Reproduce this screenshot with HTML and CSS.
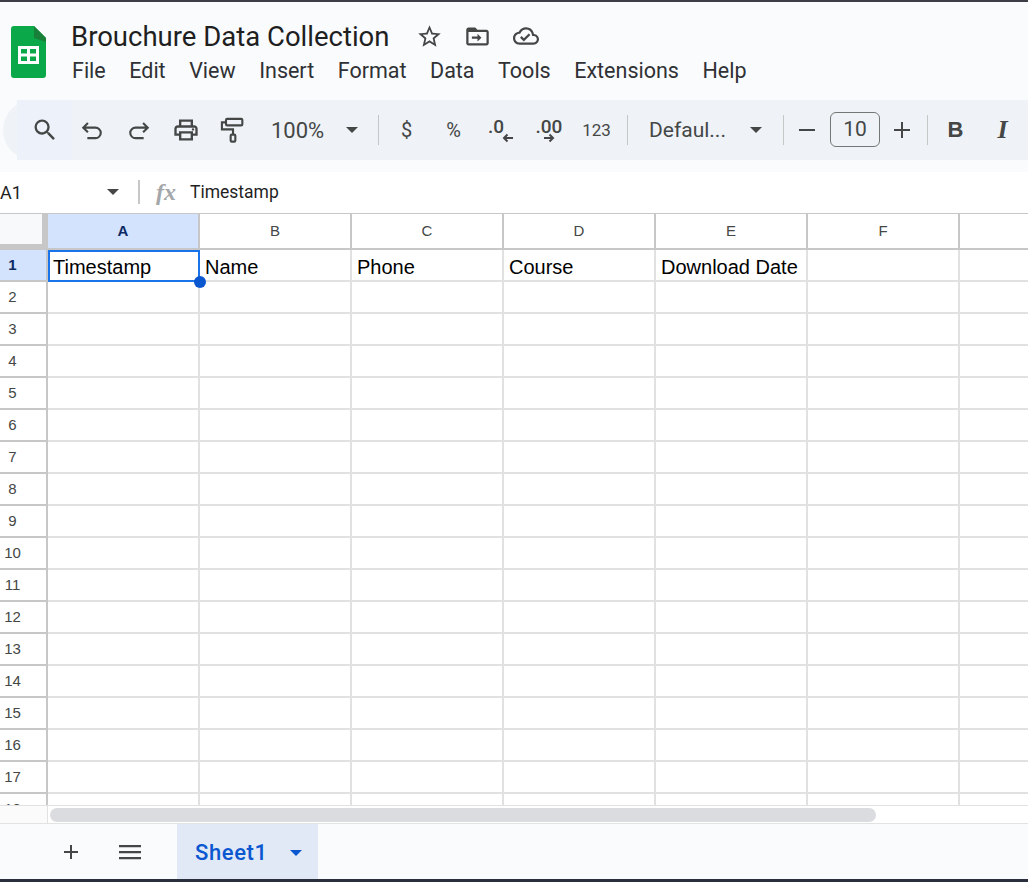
FILE: index.html
```html
<!DOCTYPE html>
<html lang="en">
  <head>
    <meta charset="UTF-8" />
    <title>Brouchure Data Collection</title>
    <link rel="stylesheet" href="styles.css">
  </head>
  <body>
    <header class="docbar">
      <svg class="logo" viewBox="0 0 35 52">
        <path d="M3 0H23L35 12V49a3 3 0 0 1-3 3H3a3 3 0 0 1-3-3V3a3 3 0 0 1 3-3z" fill="#0ba84a"/>
        <path d="M23 0L35 12V16L23 12z" fill="#188038"/>
        <path d="M7 20H28V38H7zM10 23V27.5H16V23zM19 23V27.5H25V23zM10 30.5V35H16V30.5zM19 30.5V35H25V30.5z" fill="#fff" fill-rule="evenodd"/>
      </svg>
      <div class="docinfo">
        <div class="titlerow">
          <span class="doctitle">Brouchure Data Collection</span>
          <svg class="ico star" viewBox="0 0 24 24"><path d="M22 9.24l-7.19-.62L12 2 9.19 8.63 2 9.24l5.46 4.73L5.82 21 12 17.27 18.18 21l-1.63-7.03L22 9.24zM12 15.4l-3.76 2.27 1-4.28-3.32-2.88 4.38-.38L12 6.1l1.71 4.04 4.38.38-3.32 2.88 1 4.28L12 15.4z"/></svg>
          <svg class="ico move" viewBox="0 0 24 24"><path d="M20 6h-8l-2-2H4c-1.1 0-2 .9-2 2v12c0 1.1.9 2 2 2h16c1.1 0 2-.9 2-2V8c0-1.1-.9-2-2-2zm0 12H4V8h16v10z"/><path d="M12 9.5l3.5 3.500L12 16.500v-2.500H7v-2h5z"/></svg>
          <svg class="ico cloud" viewBox="0 0 24 24"><path d="M19.35 10.04C18.67 6.59 15.64 4 12 4 9.11 4 6.6 5.64 5.35 8.04 2.34 8.36 0 10.91 0 14c0 3.31 2.69 6 6 6h13c2.76 0 5-2.24 5-5 0-2.64-2.05-4.78-4.65-4.96zM19 18H6c-2.21 0-4-1.79-4-4 0-2.05 1.53-3.76 3.56-3.97l1.07-.11.5-.95C8.08 7.14 9.94 6 12 6c2.62 0 4.88 1.86 5.39 4.43l.3 1.500 1.530.11c1.560.1 2.780 1.410 2.780 2.960 0 1.650-1.350 3-3 3zm-9-3.820l-2.090-2.090L6.500 13.500 10 17l6.010-6.010-1.410-1.410z"/></svg>
        </div>
        <nav class="menu">
          <span>File</span>
          <span>Edit</span>
          <span>View</span>
          <span>Insert</span>
          <span>Format</span>
          <span>Data</span>
          <span>Tools</span>
          <span>Extensions</span>
          <span>Help</span>
        </nav>
      </div>
    </header>

    <div class="toolbar">
      <div class="tool search">
        <svg class="ico big" viewBox="0 0 24 24"><path d="M15.500 14h-.79l-.28-.27A6.471 6.471 0 0 0 16 9.500 6.500 6.500 0 1 0 9.500 16c1.610 0 3.090-.59 4.230-1.570l.27.28v.79l5 4.990L20.490 19l-4.990-5zm-6 0C7.010 14 5 11.990 5 9.500S7.010 5 9.500 5 14 7.010 14 9.500 11.990 14 9.500 14z"/></svg>
      </div>
      <div class="tool">
        <svg class="ico line big" viewBox="0 0 24 24"><path d="M8.500 6L4.500 10l4 4M4.500 10H15a4.500 4.500 0 0 1 0 9H8"/></svg>
      </div>
      <div class="tool">
        <svg class="ico line big" viewBox="0 0 24 24"><path d="M15.500 6l4 4-4 4M19.500 10H9a4.500 4.500 0 0 0 0 9h7"/></svg>
      </div>
      <div class="tool">
        <svg class="ico big" viewBox="0 0 24 24"><path d="M19 8h-1V3H6v5H5c-1.660 0-3 1.340-3 3v6h4v4h12v-4h4v-6c0-1.660-1.340-3-3-3zM8 5h8v3H8V5zm8 12v2H8v-4h8v2zm2-2v-2H6v2H4v-4c0-.55.45-1 1-1h14c.55 0 1 .45 1 1v4h-2z"/><circle cx="18" cy="11.500" r="1"/></svg>
      </div>
      <div class="tool">
        <svg class="ico line big" viewBox="0 0 24 24"><rect x="6" y="2.500" width="14" height="5.500" rx="1"/><path d="M6 5.500H2.500v6H12V16"/><rect x="10" y="16" width="4" height="6" rx="1"/></svg>
      </div>
      <span class="zoomval">100%</span>
      <span class="caret zoomcaret"></span>
      <span class="sep"></span>
      <div class="tool glyph">$</div>
      <div class="tool glyph">%</div>
      <div class="tool dec dec-less">
        <span>.0</span>
        <svg class="arrow" viewBox="0 0 12 10"><path d="M11 5H2M5.500 1.500L2 5l3.500 3.500"/></svg>
      </div>
      <div class="tool dec">
        <span>.00</span>
        <svg class="arrow" viewBox="0 0 12 10"><path d="M1 5h9M6.500 1.500L10 5 6.500 8.500"/></svg>
      </div>
      <div class="tool glyph small">123</div>
      <span class="sep sep-b"></span>
      <span class="fontname">Defaul...</span>
      <span class="caret fontcaret"></span>
      <span class="sep sep-c"></span>
      <div class="step">
        <svg class="ico line" viewBox="0 0 24 24"><path d="M4 12h16"/></svg>
      </div>
      <div class="fontsize">10</div>
      <div class="step step-plus">
        <svg class="ico line" viewBox="0 0 24 24"><path d="M4 12h16M12 4v16"/></svg>
      </div>
      <span class="sep sep-d"></span>
      <div class="tool fmt bold">B</div>
      <div class="tool fmt ital">I</div>
    </div>

    <div class="formulabar">
      <span class="namebox">A1</span>
      <span class="caret namecaret"></span>
      <span class="fbsep"></span>
      <span class="fx">fx</span>
      <span class="formula">Timestamp</span>
    </div>

    <div class="sheet">
      <table>
        <thead>
          <tr id="col-head"></tr>
        </thead>
        <tbody id="rows">
          <!-- filled by script below -->
        </tbody>
      </table>
      <span class="handle"></span>
    </div>

    <div class="scrollrow">
      <span class="scrollcorner"></span>
      <span class="thumb"></span>
    </div>

    <footer class="tabbar">
      <svg class="ico addsheet" viewBox="0 0 24 24"><path d="M19 13h-6v6h-2v-6H5v-2h6V5h2v6h6v2z"/></svg>
      <svg class="ico allsheets" viewBox="0 0 24 24"><path d="M1 5h22v2.200H1zM1 11h22v2.200H1zM1 17h22v2.200H1z"/></svg>
      <div class="sheettab">
        <span>Sheet1</span>
        <span class="caret tabcaret"></span>
      </div>
    </footer>

    <script>
      const headers = ["Timestamp", "Name", "Phone", "Course", "Download Date", "", ""];
      const letters = ["A", "B", "C", "D", "E", "F", "G"];
      const rowCount = 18;

      const headRow = document.getElementById("col-head");
      const corner = document.createElement("th");
      corner.className = "corner";
      headRow.appendChild(corner);
      letters.forEach((l, i) => {
        const th = document.createElement("th");
        th.textContent = i < 6 ? l : "";
        if (i === 0) th.className = "active";
        headRow.appendChild(th);
      });

      const body = document.getElementById("rows");
      for (let r = 1; r <= rowCount; r++) {
        const tr = document.createElement("tr");
        const num = document.createElement("td");
        num.className = r === 1 ? "rownum active" : "rownum";
        num.textContent = r;
        tr.appendChild(num);
        letters.forEach((l, i) => {
          const td = document.createElement("td");
          if (r === 1) td.textContent = headers[i];
          if (r === 1 && i === 0) td.className = "selected";
          tr.appendChild(td);
        });
        body.appendChild(tr);
      }
    </script>
  </body>
</html>
```

FILE: styles.css
```css
* {
  box-sizing: border-box;
}
body {
  margin: 0;
  width: 1028px;
  height: 882px;
  overflow: hidden;
  display: flex;
  flex-direction: column;
  background: #f9fbfd;
  border-top: 2px solid #3d3d45;
  border-bottom: 3px solid #2b2f3c;
  font-family: Roboto, "Liberation Sans", sans-serif;
  color: #444746;
}
.ico {
  width: 24px;
  height: 24px;
  fill: #444746;
  flex: none;
}
.ico.big {
  width: 28px;
  height: 28px;
}
.ico.line,
.ico.line * {
  fill: none;
  stroke: #444746;
  stroke-width: 2;
}
.ico.line.big,
.ico.line.big * {
  stroke-width: 1.800;
}

/* title + menus */
.docbar {
  height: 98px;
  flex: none;
  display: flex;
  padding: 24px 0 0 11px;
}
.logo {
  width: 35px;
  height: 52px;
  flex: none;
}
.docinfo {
  margin-left: 25px;
}
.titlerow {
  height: 28px;
  margin-top: -4px;
  display: flex;
  align-items: center;
}
.doctitle {
  font-size: 27.500px;
  color: #1f1f1f;
  width: 345px;
  white-space: nowrap;
}
.star {
  width: 27px;
  height: 27px;
}
.move {
  width: 27px;
  height: 27px;
  margin-left: 21px;
}
.cloud {
  width: 26px;
  height: 26px;
  margin-left: 22px;
}
.menu {
  display: flex;
  gap: 23.500px;
  margin-top: 8px;
  margin-left: 1px;
  font-size: 21.500px;
  line-height: 26px;
  color: #303134;
}

/* toolbar */
.toolbar {
  height: 60px;
  width: 1060px;
  flex: none;
  margin-left: 3px;
  padding-left: 14px;
  display: flex;
  align-items: center;
  background: #eff2f7;
  border-radius: 30px;
}
.tool {
  width: 47px;
  height: 60px;
  flex: none;
  display: flex;
  align-items: center;
  justify-content: center;
}
.search {
  width: 55px;
  background: #edf1fa;
  margin-right: -4px;
}
.caret {
  width: 0;
  height: 0;
  flex: none;
  border-left: 6px solid transparent;
  border-right: 6px solid transparent;
  border-top: 6px solid #444746;
}
.zoomval {
  margin-left: 15px;
  font-size: 22px;
  width: 75px;
}
.zoomcaret {
  margin-right: 20px;
}
.sep {
  width: 1px;
  height: 30px;
  flex: none;
  background: #c4c7c5;
  margin-right: 4px;
}
.glyph {
  font-size: 20px;
  font-weight: 400;
}
.glyph.small {
  font-size: 17px;
}
.dec {
  width: 48px;
  flex-direction: column;
  font-size: 19px;
  font-weight: 500;
  line-height: 17px;
}
.arrow {
  width: 12px;
  height: 10px;
  margin-top: -2px;
  fill: none;
  stroke: #444746;
  stroke-width: 2;
}
.dec-less span {
  margin-right: 10px;
}
.dec-less .arrow {
  margin-left: 14px;
}
.sep-b {
  margin-left: 7px;
}
.fontname {
  margin-left: 17px;
  font-size: 21px;
  width: 101px;
}
.fontcaret {
  margin-right: 21px;
}
.sep-c {
  margin-right: 0;
}
.step {
  width: 46px;
  display: flex;
  justify-content: center;
}
.step-plus {
  width: 43px;
}
.fontsize {
  width: 50px;
  height: 35px;
  margin-bottom: 1px;
  border: 1px solid #747775;
  border-radius: 6px;
  font-size: 21px;
  line-height: 33px;
  text-align: center;
}
.sep-d {
  margin-left: 4px;
  margin-right: 4px;
}
.fmt {
  font-family: "Liberation Sans", sans-serif;
  font-size: 22px;
}
.bold {
  font-weight: 700;
}
.ital {
  font-style: italic;
  font-weight: 700;
  font-family: "Liberation Serif", serif;
  font-size: 26px;
}

/* formula bar */
.formulabar {
  height: 42px;
  flex: none;
  margin-top: 12px;
  padding-bottom: 1px;
  display: flex;
  align-items: center;
  background: #fff;
  border-bottom: 1px solid #c7c7c7;
  font-size: 17.500px;
  color: #1f1f1f;
}
.namebox {
  width: 107px;
  font-size: 18px;
}
.namecaret {
  margin-right: 19px;
}
.fbsep {
  width: 2px;
  height: 24px;
  background: #c7c7c7;
  margin-right: 16px;
}
.fx {
  width: 34px;
  font-family: "Liberation Serif", serif;
  font-style: italic;
  font-weight: 700;
  font-size: 24px;
  color: #a4a7aa;
}

/* grid */
.sheet {
  position: relative;
  height: 591px;
  flex: none;
  overflow: hidden;
  background: #fff;
}
table {
  border-collapse: separate;
  border-spacing: 0;
  table-layout: fixed;
  width: 1112px;
}
th,
td {
  width: 152px;
  padding: 0;
  overflow: hidden;
  white-space: nowrap;
}
th {
  height: 36px;
  padding-bottom: 2px;
  font-family: "Liberation Sans", sans-serif;
  font-size: 15px;
  font-weight: 400;
  color: #444746;
  border-right: 2px solid #c7c7c7;
  border-bottom: 2px solid #c7c7c7;
}
th.corner {
  width: 48px;
  background: #f8f9fa;
  border-right-width: 6px;
  border-bottom-width: 6px;
}
th.active {
  background: #d3e3fd;
  color: #0b2a63;
  font-weight: 700;
}
td {
  height: 32px;
  padding: 4px 0 0 5px;
  font-family: "Liberation Sans", sans-serif;
  font-size: 20px;
  color: #000;
  border-right: 2px solid #e1e1e1;
  border-bottom: 2px solid #e1e1e1;
}
td.rownum {
  width: 48px;
  padding: 0 21px 2px 0;
  font-size: 15px;
  text-align: center;
  color: #444746;
  border-right-color: #c7c7c7;
  border-bottom-color: #c7c7c7;
}
td.rownum.active {
  background: #d3e3fd;
  color: #0b2a63;
  font-weight: 700;
}
td.selected {
  padding: 2px 0 0 3px;
  border: 2px solid #1a73e8;
}
.handle {
  position: absolute;
  left: 194px;
  top: 62px;
  width: 12px;
  height: 12px;
  border-radius: 50%;
  background: #0b57d0;
}

/* scrollbar + tabs */
.scrollrow {
  height: 19px;
  flex: none;
  display: flex;
  align-items: center;
  background: #fff;
  border-top: 1px solid #e1e3e1;
  border-bottom: 1px solid #e1e3e1;
}
.scrollcorner {
  width: 48px;
  height: 100%;
  background: #fbfbfb;
  border-right: 1px solid #e1e3e1;
}
.thumb {
  width: 826px;
  height: 14px;
  margin-left: 2px;
  border-radius: 7px;
  background: #dadce0;
}
.tabbar {
  flex: 1;
  display: flex;
  align-items: center;
  padding-left: 59px;
}
.allsheets {
  margin-left: 35px;
}
.sheettab {
  height: 100%;
  width: 141px;
  margin-left: 35px;
  padding: 2px 0 0 18px;
  display: flex;
  align-items: center;
  background: #e1e9f7;
  color: #0b57d0;
  font-size: 22px;
  font-weight: 500;
  letter-spacing: 0.6px;
}
.tabcaret {
  margin-left: 22px;
  border-top-color: #0b57d0;
}
```
